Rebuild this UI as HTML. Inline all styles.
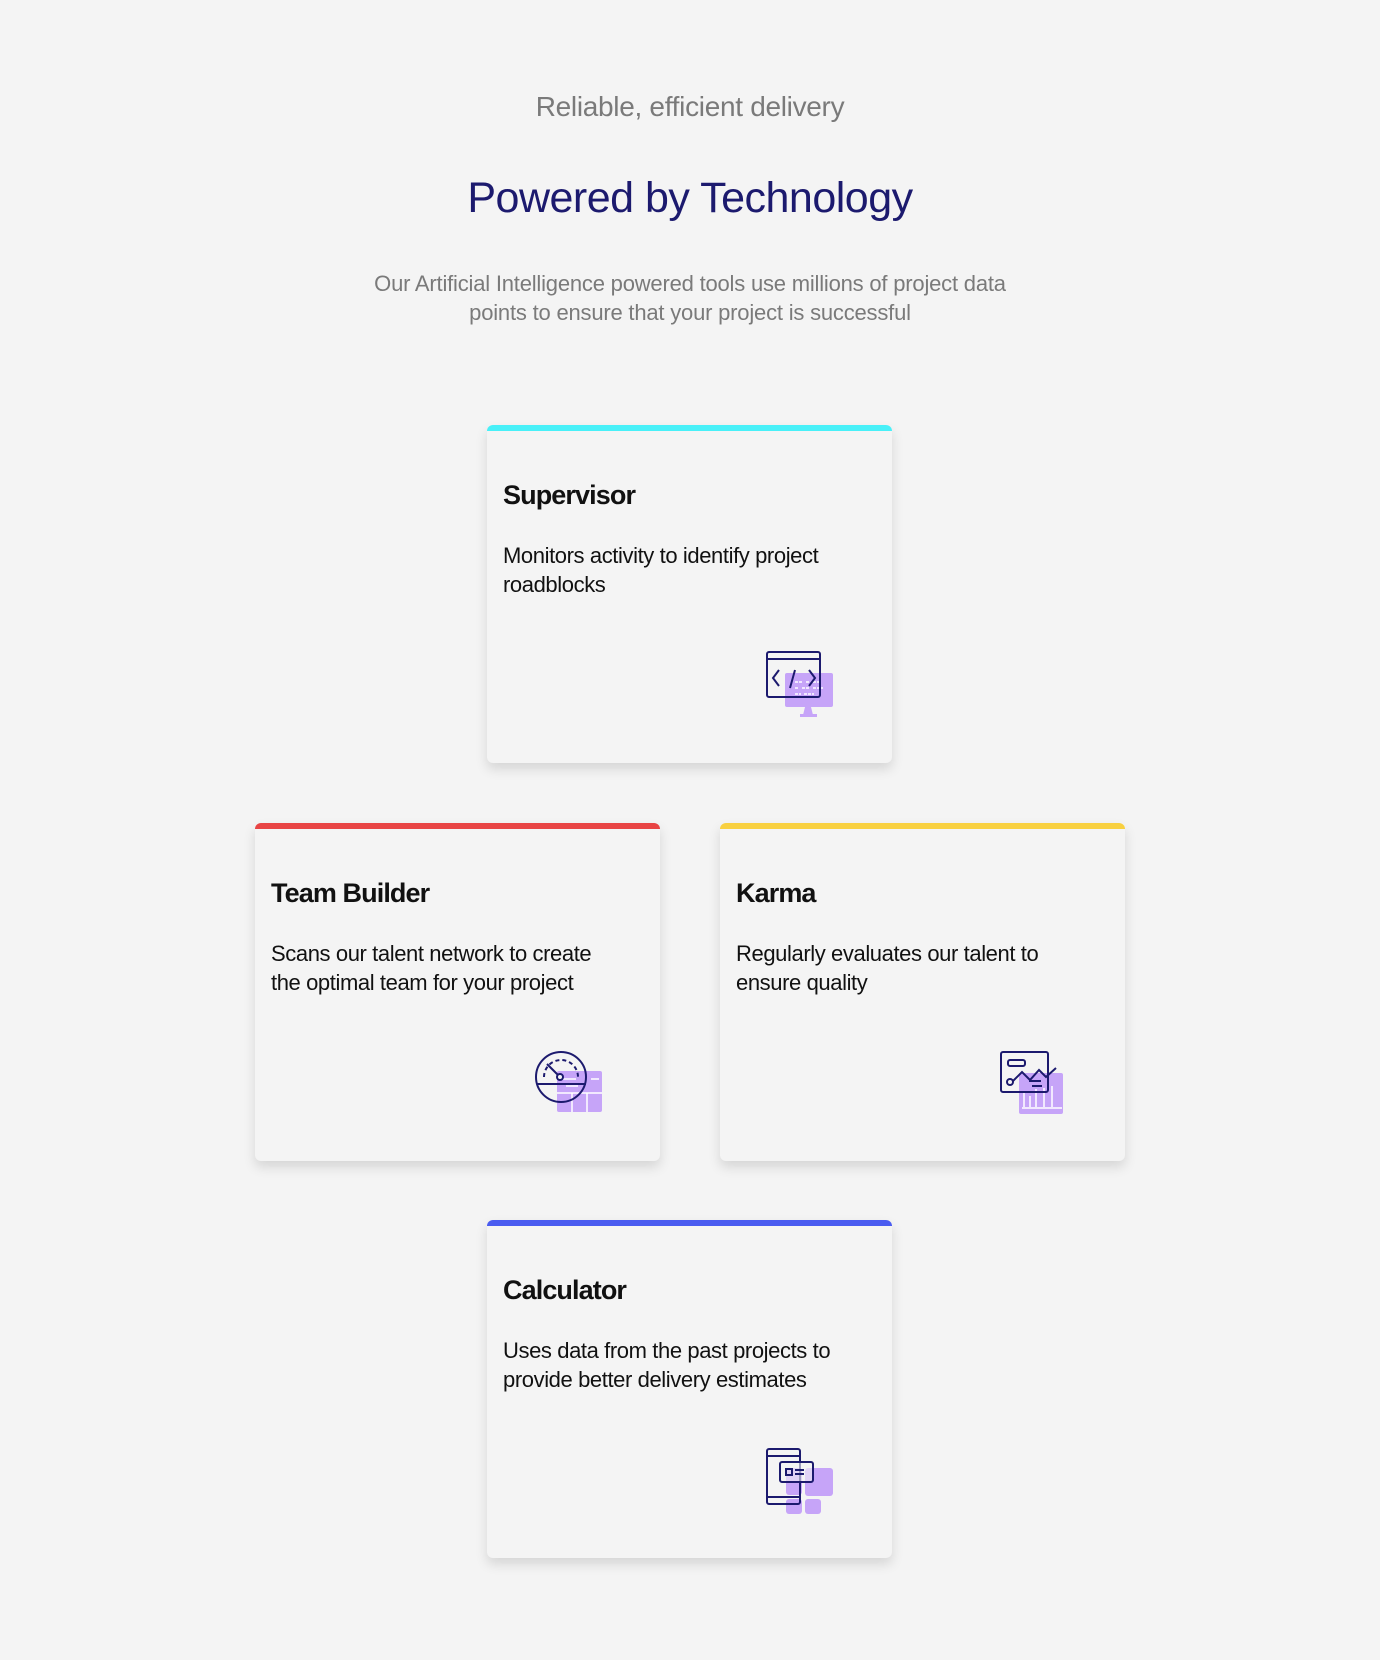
<!DOCTYPE html>
<html><head><meta charset="utf-8"><style>
body{margin:0;background:#f4f4f4;width:1380px;height:1660px;position:relative;font-family:"Liberation Sans",sans-serif;overflow:hidden}
.c{position:absolute;left:0;width:1380px;text-align:center}
.card{position:absolute;width:405px;height:338px;background:#f4f4f4;border-radius:6px;box-shadow:0 6px 12px rgba(0,0,0,0.13);overflow:hidden}
.card .bar{height:6px}
.card h3{position:absolute;left:16px;top:55px;margin:0;font-size:27px;font-weight:bold;color:#111;letter-spacing:-0.9px}
.card p{position:absolute;left:16px;top:116px;margin:0;width:355px;font-size:22px;line-height:29px;color:#111;letter-spacing:-0.4px}
.card svg{position:absolute;right:56px;bottom:40px}
</style></head><body>
<div class="c" style="top:91px;font-size:28px;color:#7a7a7a;letter-spacing:-0.3px">Reliable, efficient delivery</div>
<div class="c" style="top:174px;font-size:43px;color:#1c1a6e;letter-spacing:-0.5px">Powered by Technology</div>
<div class="c" style="top:269px;font-size:22px;line-height:29px;color:#7a7a7a;letter-spacing:-0.2px">Our Artificial Intelligence powered tools use millions of project data<br>points to ensure that your project is successful</div>

<div class="card" style="left:487px;top:425px"><div class="bar" style="background:#48f0f8"></div>
<h3>Supervisor</h3><p>Monitors activity to identify project roadblocks</p>
<svg width="70" height="70" viewBox="0 0 70 70" style="bottom:42px"><rect x="19" y="22" width="48" height="34" rx="2" fill="#c6a4f8"/><path d="M39 56h6l2 8h-10z M34 63h17v3H34z" fill="#c6a4f8"/><path d="M29 31h8M40 31h4M47 31h6M29 37h4M36 37h8M47 37h10M29 43h6M38 43h10" stroke="#fff" stroke-width="1.5" stroke-dasharray="3 1"/><rect x="1" y="1" width="53" height="45" rx="2" fill="none" stroke="#1c1a6e" stroke-width="2"/><path d="M1 8h53M13 19l-6 8 6 8M43 19l6 8-6 8M24 37l5-18" fill="none" stroke="#1c1a6e" stroke-width="2"/></svg></div>

<div class="card" style="left:255px;top:823px"><div class="bar" style="background:#e84444"></div>
<h3>Team Builder</h3><p>Scans our talent network to create the optimal team for your project</p>
<svg width="70" height="70" viewBox="0 0 70 70"><rect x="23" y="20" width="45" height="41" rx="2" fill="#c6a4f8"/><path d="M23 42h45M38 42v19M53 42v19M32 35h12M28 28h14M57 28h8" stroke="#fff" stroke-width="1.5"/><circle cx="27" cy="26" r="25" fill="none" stroke="#1c1a6e" stroke-width="2"/><path d="M3 33h49" stroke="#1c1a6e" stroke-width="2"/><path d="M10 26a17 17 0 0 1 34 0" fill="none" stroke="#1c1a6e" stroke-width="2" stroke-dasharray="4 3"/><path d="M13 13l11 11" stroke="#1c1a6e" stroke-width="2"/><circle cx="26" cy="26" r="3" fill="#f4f4f4" stroke="#1c1a6e" stroke-width="2"/></svg></div>

<div class="card" style="left:720px;top:823px"><div class="bar" style="background:#f8d040"></div>
<h3>Karma</h3><p>Regularly evaluates our talent to ensure quality</p>
<svg width="70" height="70" viewBox="0 0 70 70"><rect x="20" y="22" width="44" height="41" rx="2" fill="#c6a4f8"/><path d="M25 56V41M31 56V45M37 56V38M45 56V37M53 56V35M23 57h40" stroke="#fff" stroke-width="1.5"/><rect x="2" y="1" width="47" height="40" rx="2" fill="none" stroke="#1c1a6e" stroke-width="2"/><rect x="9" y="9" width="17" height="6" rx="2" fill="none" stroke="#1c1a6e" stroke-width="2"/><path d="M14 30l9-9 8 8 9-10 7 7 10-9M30 30h12M33 35h10" fill="none" stroke="#1c1a6e" stroke-width="2"/><circle cx="11" cy="31" r="3" fill="#f4f4f4" stroke="#1c1a6e" stroke-width="2"/></svg></div>

<div class="card" style="left:487px;top:1220px"><div class="bar" style="background:#4a5cf0"></div>
<h3>Calculator</h3><p>Uses data from the past projects to provide better delivery estimates</p>
<svg width="70" height="70" viewBox="0 0 70 70" style="right:58px;bottom:42px"><rect x="22" y="22" width="16" height="27" rx="3" fill="#c6a4f8"/><rect x="41" y="22" width="28" height="28" rx="3" fill="#c6a4f8"/><rect x="22" y="53" width="16" height="15" rx="3" fill="#c6a4f8"/><rect x="41" y="53" width="16" height="15" rx="3" fill="#c6a4f8"/><rect x="3" y="3" width="33" height="55" rx="2" fill="none" stroke="#1c1a6e" stroke-width="2"/><path d="M3 10h33M3 51h33" stroke="#1c1a6e" stroke-width="2"/><rect x="16" y="16" width="33" height="20" rx="2" fill="#f4f4f4" fill-opacity="0.6" stroke="#1c1a6e" stroke-width="2"/><rect x="22" y="23" width="6" height="6" fill="none" stroke="#1c1a6e" stroke-width="2"/><path d="M31 24h9M31 28h9" stroke="#1c1a6e" stroke-width="2"/></svg></div>
</body></html>
